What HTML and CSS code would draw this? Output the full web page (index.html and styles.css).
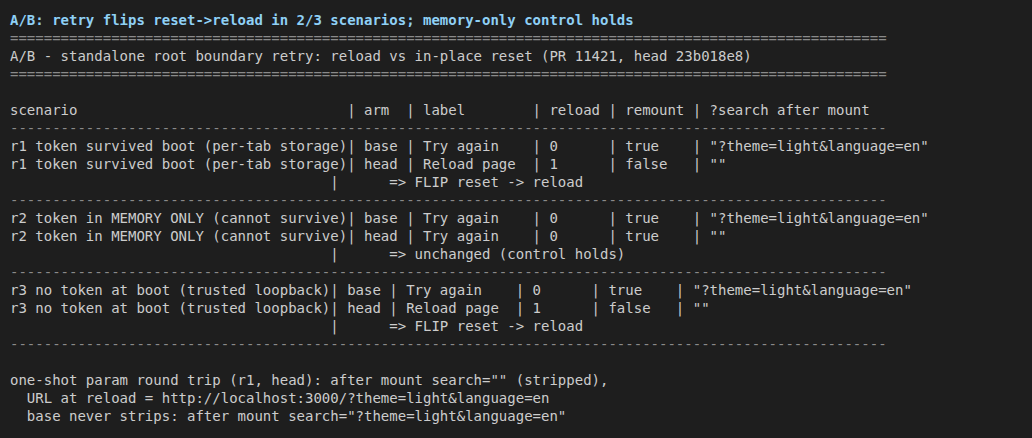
FILE: index.html
```html
<!DOCTYPE html>
<html lang="en">
<head>
<meta charset="utf-8">
<title>A/B retry report</title>
<link rel="stylesheet" href="styles.css">
</head>
<body>
<main class="term">
<div class="line title">A/B: retry flips reset-&gt;reload in 2/3 scenarios; memory-only control holds</div>
<div class="line rule">========================================================================================================</div>
<div class="line">A/B - standalone root boundary retry: reload vs in-place reset (PR 11421, head 23b018e8)</div>
<div class="line rule">========================================================================================================</div>
<div class="line"> </div>
<div class="line">scenario                                | arm  | label        | reload | remount | ?search after mount</div>
<div class="line rule">--------------------------------------------------------------------------------------------------------</div>
<div class="line">r1 token survived boot (per-tab storage)| base | Try again    | 0      | true    | "?theme=light&amp;language=en"</div>
<div class="line">r1 token survived boot (per-tab storage)| head | Reload page  | 1      | false   | ""</div>
<div class="line">                                      |      =&gt; FLIP reset -&gt; reload</div>
<div class="line rule">--------------------------------------------------------------------------------------------------------</div>
<div class="line">r2 token in MEMORY ONLY (cannot survive)| base | Try again    | 0      | true    | "?theme=light&amp;language=en"</div>
<div class="line">r2 token in MEMORY ONLY (cannot survive)| head | Try again    | 0      | true    | ""</div>
<div class="line">                                      |      =&gt; unchanged (control holds)</div>
<div class="line rule">--------------------------------------------------------------------------------------------------------</div>
<div class="line">r3 no token at boot (trusted loopback)| base | Try again    | 0      | true    | "?theme=light&amp;language=en"</div>
<div class="line">r3 no token at boot (trusted loopback)| head | Reload page  | 1      | false   | ""</div>
<div class="line">                                      |      =&gt; FLIP reset -&gt; reload</div>
<div class="line rule">--------------------------------------------------------------------------------------------------------</div>
<div class="line"> </div>
<div class="line">one-shot param round trip (r1, head): after mount search="" (stripped),</div>
<div class="line">  URL at reload = http://localhost:3000/?theme=light&amp;language=en</div>
<div class="line">  base never strips: after mount search="?theme=light&amp;language=en"</div>
</main>
</body>
</html>
```

FILE: styles.css
```css
html, body {
  margin: 0;
  padding: 0;
  background: #1e1e1e;
}
body {
  width: 1032px;
  height: 438px;
  overflow: hidden;
}
.term {
  padding: 11px 10px 0 10px;
  font-family: "DejaVu Sans Mono", "Liberation Mono", monospace;
  font-size: 14px;
  line-height: 18px;
  color: #cccccc;
}
.line {
  white-space: pre;
  height: 18px;
}
.title {
  color: #8fd0f5;
  font-weight: bold;
}
.rule {
  color: #8a8a8a;
}
```
